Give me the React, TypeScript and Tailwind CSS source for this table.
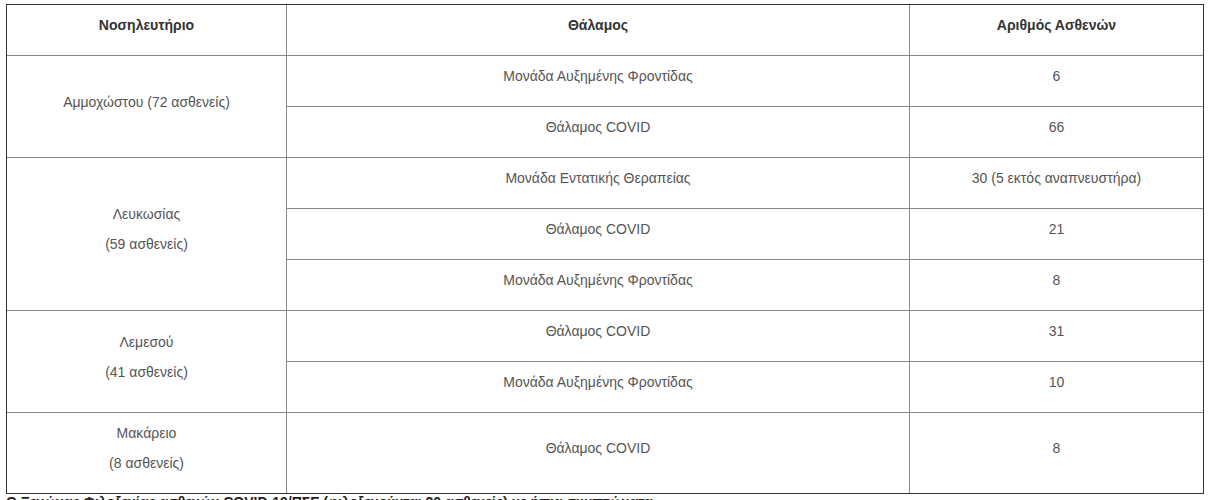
import React from 'react';

type Ward = { name: string; count: string };
type Hospital = { lines: string[]; wards: Ward[] };

const hospitals: Hospital[] = [
  {
    lines: ['Αμμοχώστου (72 ασθενείς)'],
    wards: [
      { name: 'Μονάδα Αυξημένης Φροντίδας', count: '6' },
      { name: 'Θάλαμος COVID', count: '66' },
    ],
  },
  {
    lines: ['Λευκωσίας', '(59 ασθενείς)'],
    wards: [
      { name: 'Μονάδα Εντατικής Θεραπείας', count: '30 (5 εκτός αναπνευστήρα)' },
      { name: 'Θάλαμος COVID', count: '21' },
      { name: 'Μονάδα Αυξημένης Φροντίδας', count: '8' },
    ],
  },
  {
    lines: ['Λεμεσού', '(41 ασθενείς)'],
    wards: [
      { name: 'Θάλαμος COVID', count: '31' },
      { name: 'Μονάδα Αυξημένης Φροντίδας', count: '10' },
    ],
  },
  {
    lines: ['Μακάρειο', '(8 ασθενείς)'],
    wards: [{ name: 'Θάλαμος COVID', count: '8' }],
  },
];

const cell = 'border border-[#8a8a8a] px-[10px] py-[10px] text-center align-middle';

function Lines({ items }: { items: string[] }) {
  return (
    <>
      {items.map((t) => (
        <p key={t} className="mb-[10px] leading-[20px]">
          {t}
        </p>
      ))}
    </>
  );
}

export default function App() {
  return (
    <div className="bg-white min-h-[500px] font-['Liberation_Sans',Arial,sans-serif] text-[14px] text-[#555]">
      <div className="pt-[4px] pl-[6px] pr-[6px]">
        <div className="w-[1198px] border border-[#333] overflow-hidden">
          <table className="-m-px w-[calc(100%+2px)] border-collapse table-fixed">
            <colgroup>
              <col className="w-[280px]" />
              <col className="w-[623px]" />
              <col />
            </colgroup>
            <thead>
              <tr>
                {['Νοσηλευτήριο', 'Θάλαμος', 'Αριθμός Ασθενών'].map((h) => (
                  <th key={h} className={`${cell} font-bold text-[#333]`}>
                    <Lines items={[h]} />
                  </th>
                ))}
              </tr>
            </thead>
            <tbody>
              {hospitals.map((h) =>
                h.wards.map((w, i) => (
                  <tr key={h.lines[0] + w.name}>
                    {i === 0 && (
                      <td rowSpan={h.wards.length} className={cell}>
                        <Lines items={h.lines} />
                      </td>
                    )}
                    <td className={cell}>
                      <Lines items={[w.name]} />
                    </td>
                    <td className={cell}>
                      <Lines items={[w.count]} />
                    </td>
                  </tr>
                ))
              )}
            </tbody>
          </table>
        </div>
        <p className="leading-[16px] font-bold text-[#222] whitespace-nowrap">
          Ο Ξενώνας Φιλοξενίας ασθενών COVID-19/ΠΣΕ (φιλοξενούνται 20 ασθενείς) με ήπια συμπτώματα.
        </p>
      </div>
    </div>
  );
}
